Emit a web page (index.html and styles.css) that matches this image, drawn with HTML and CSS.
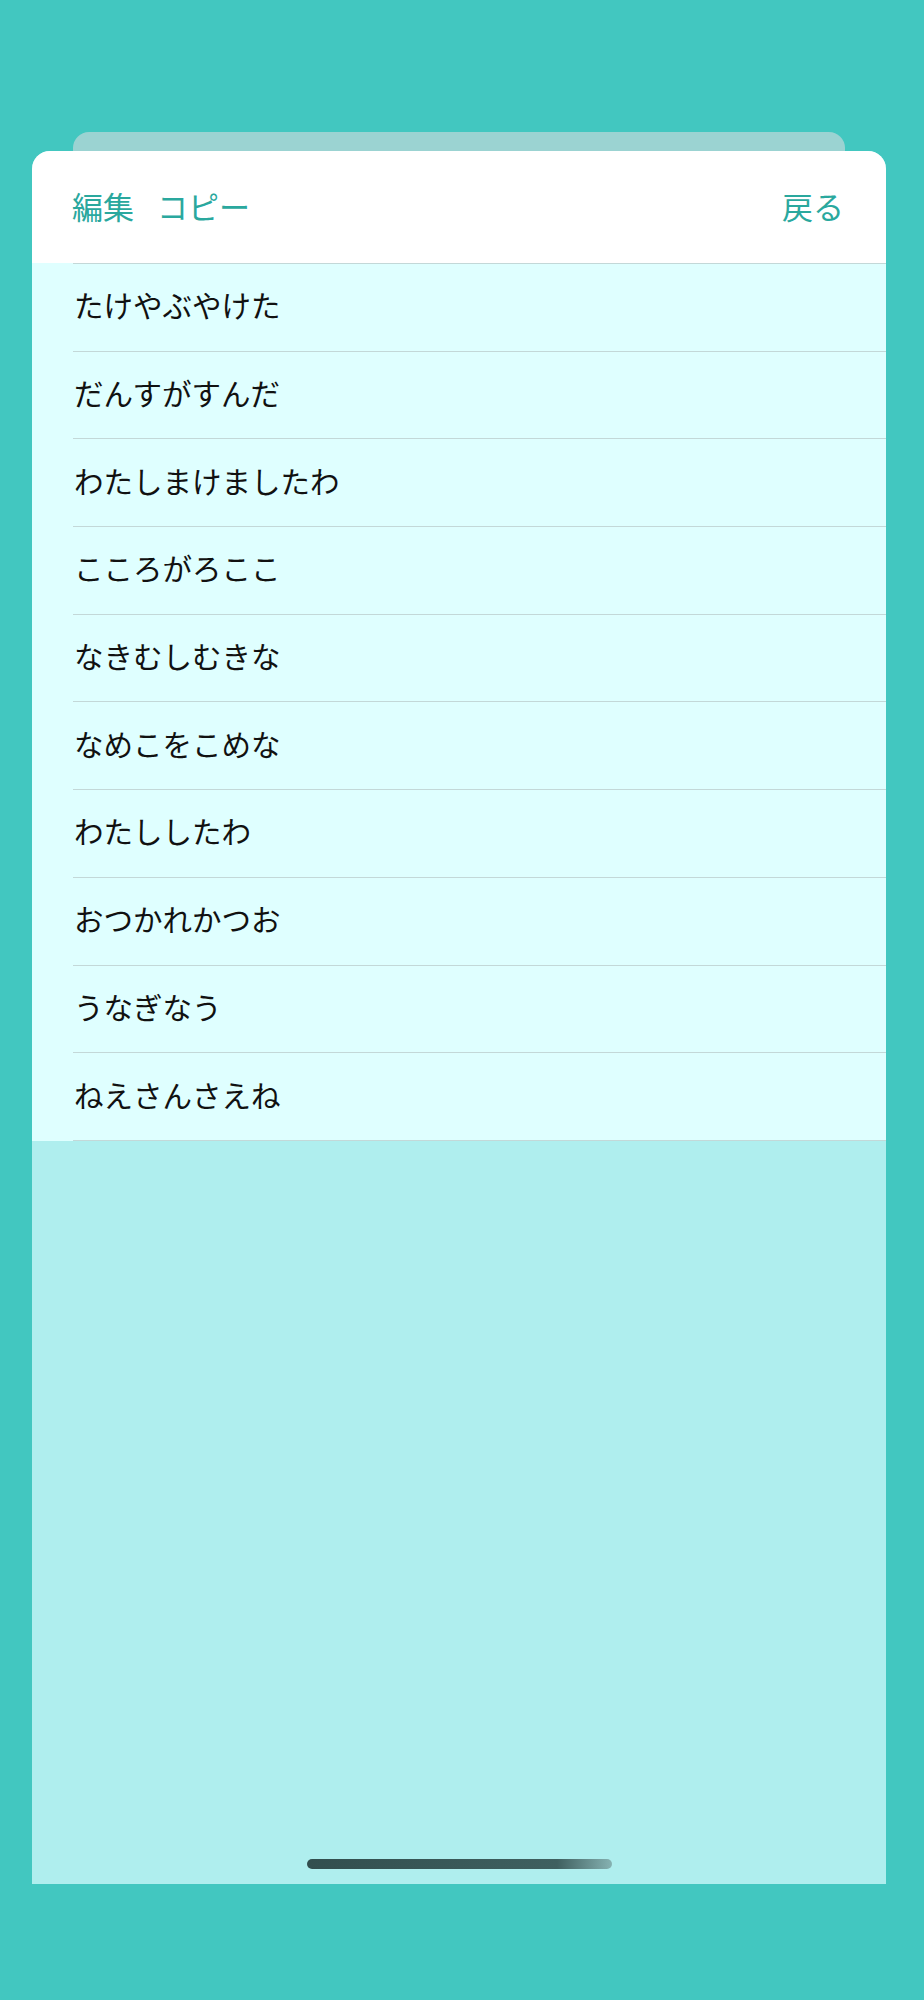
FILE: index.html
```html
<!DOCTYPE html>
<html lang="ja">
<head>
    <meta charset="UTF-8">
    <title>回文リスト</title>
    <link rel="stylesheet" href="styles.css">
</head>
<body>
    <div class="screen">
        <div class="back-card"></div>
        <div class="sheet">
            <div class="header">
                <div class="actions">
                    <span class="action">編集</span>
                    <span class="action">コピー</span>
                </div>
                <span class="action">戻る</span>
            </div>

            <ul class="list">
                <li class="row">たけやぶやけた</li>
                <li class="row">だんすがすんだ</li>
                <li class="row">わたしまけましたわ</li>
                <li class="row">こころがろここ</li>
                <li class="row">なきむしむきな</li>
                <li class="row">なめこをこめな</li>
                <li class="row">わたししたわ</li>
                <li class="row">おつかれかつお</li>
                <li class="row">うなぎなう</li>
                <li class="row">ねえさんさえね</li>
            </ul>

            <div class="rest">
                <div class="home-bar"></div>
            </div>
        </div>
    </div>
</body>
</html>
```

FILE: styles.css
```css
body {
    margin: 0;
    background-color: #42c7c0;
    font-family: "Noto Sans CJK JP", "Noto Sans", sans-serif;
}

.screen {
    width: 924px;
    height: 2000px;
    padding-top: 132px;
    box-sizing: border-box;
}

.back-card {
    margin: 0 79px 0 73px;
    height: 19px;
    background: #9bd3d2;
    border-radius: 16px 16px 0 0;
}

.sheet {
    margin-left: 32px;
    width: 854px;
    height: 1733px;
    border-radius: 18px 18px 0 0;
    overflow: hidden;
    display: flex;
    flex-direction: column;
    background: #afeeee;
}

.header {
    height: 112px;
    flex-shrink: 0;
    box-sizing: border-box;
    background: #fff;
    display: flex;
    align-items: center;
    justify-content: space-between;
    padding: 0 42px 4px 40px;
}

.actions {
    display: flex;
    gap: 23px;
}

.action {
    color: #2aa89e;
    font-size: 31px;
    line-height: 1;
}

.list {
    list-style: none;
    margin: 0;
    padding: 0 0 0 41px;
    background: #dfffff;
}

.row {
    height: 87.7px;
    box-sizing: border-box;
    border-top: 1px solid #c3d8d8;
    display: flex;
    align-items: center;
    font-size: 29.5px;
    color: #111;
    padding: 0 0 6px 1px;
}

.row:last-child {
    border-bottom: 1px solid #c3d8d8;
    height: 88.7px;
}

.rest {
    flex: 1;
    display: flex;
    align-items: flex-end;
    justify-content: center;
    padding-bottom: 15px;
}

.home-bar {
    width: 305px;
    height: 10px;
    border-radius: 5px;
    background: linear-gradient(to right, #324e4e 0%, #3f6060 82%, #86b2b2 100%);
}
```
